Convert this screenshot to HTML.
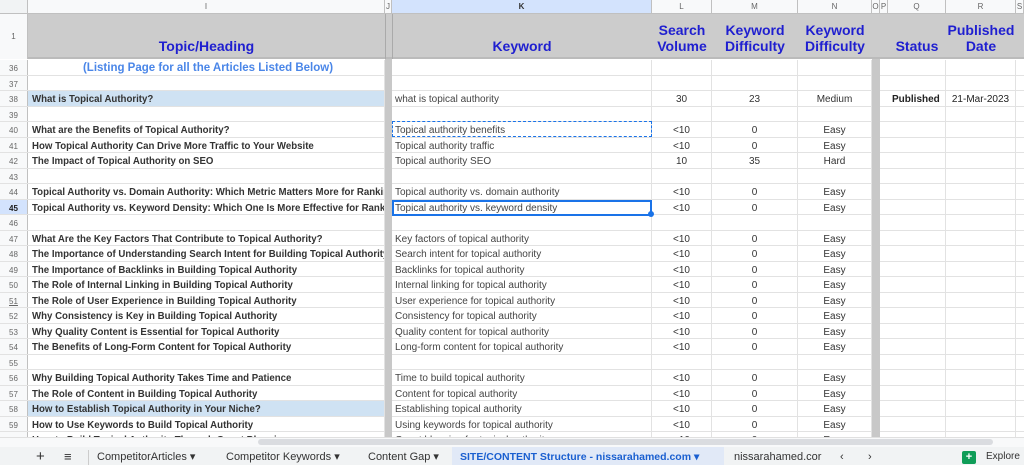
<!DOCTYPE html>
<html><head><meta charset="utf-8"><style>
*{margin:0;padding:0;box-sizing:border-box}
body{width:1024px;height:465px;overflow:hidden;background:#fff;font-family:"Liberation Sans",Arial,sans-serif;position:relative;color:#222}
.a{position:absolute}
.ch{top:0;height:14px;background:#f8f9fa;border-right:1px solid #c0c0c0;border-bottom:1px solid #c0c0c0;font-size:8px;color:#666;text-align:center;line-height:14px}
.row{position:absolute;left:0;width:1024px;height:15.5px;border-bottom:1px solid #e2e2e2}
.rn{position:absolute;left:0;width:28px;height:100%;background:#f8f9fa;border-right:1px solid #c0c0c0;font-size:8px;color:#666;text-align:center;line-height:17px}
.c{position:absolute;top:0;height:100%;line-height:17px;font-size:10px;white-space:nowrap;overflow:hidden;border-right:1px solid #e2e2e2}
.t{left:28px;width:357px;padding-left:4px;font-weight:bold;color:#333;font-size:10.5px}
.t span{display:inline-block;transform:scaleX(.92);transform-origin:0 50%}
.k{left:392px;width:260px;padding-left:3px;color:#444}
.l{left:652px;width:60px;text-align:center;color:#333}
.m{left:712px;width:86px;text-align:center;color:#333}
.n{left:798px;width:74px;text-align:center;color:#333}
.q{left:888px;width:58px;padding-left:4px;font-weight:bold}
.r{left:946px;width:70px;text-align:center}
.h{position:absolute;font-weight:bold;color:#1f1fd0;font-size:14px;text-align:center;line-height:16px}
</style></head><body>
<div class="a ch" style="left:0;width:28px;background:#f1f3f4"></div>
<div class="a ch" style="left:28px;width:357px">I</div>
<div class="a ch" style="left:385px;width:7px">J</div>
<div class="a ch" style="left:392px;width:260px;background:#d3e3fd;font-weight:bold;color:#333">K</div>
<div class="a ch" style="left:652px;width:60px">L</div>
<div class="a ch" style="left:712px;width:86px">M</div>
<div class="a ch" style="left:798px;width:74px">N</div>
<div class="a ch" style="left:872px;width:8px">O</div>
<div class="a ch" style="left:880px;width:8px">P</div>
<div class="a ch" style="left:888px;width:58px">Q</div>
<div class="a ch" style="left:946px;width:70px">R</div>
<div class="a ch" style="left:1016px;width:8px">S</div>
<div class="a" style="left:0;top:14px;width:28px;height:45px;background:#f8f9fa;border-right:1px solid #c0c0c0;font-size:8px;color:#666;text-align:center;line-height:45px">1</div>
<div class="a" style="left:28px;top:14px;width:996px;height:45px;background:#cccccc;border-bottom:2px solid #bbb"></div>
<div class="h" style="left:28px;width:357px;top:38px">Topic/Heading</div>
<div class="h" style="left:392px;width:260px;top:38px">Keyword</div>
<div class="h" style="left:652px;width:60px;top:22px">Search<br>Volume</div>
<div class="h" style="left:712px;width:86px;top:22px">Keyword<br>Difficulty</div>
<div class="h" style="left:798px;width:74px;top:22px">Keyword<br>Difficulty</div>
<div class="h" style="left:888px;width:58px;top:38px">Status</div>
<div class="h" style="left:946px;width:70px;top:22px">Published<br>Date</div>
<div class="a" style="left:385px;top:14px;width:1px;height:45px;background:#aaa"></div>
<div class="a" style="left:392px;top:14px;width:1px;height:45px;background:#aaa"></div>

<div id="rows"></div>
<div class="a" style="left:385px;top:59px;width:7px;height:378px;background:#c8c8c8"></div>
<div class="a" style="left:872px;top:59px;width:8px;height:378px;background:#c8c8c8"></div>

<div class="a" style="left:392px;top:199.5px;width:260px;height:16px;border:2px solid #1a73e8"></div>
<div class="a" style="left:648px;top:211px;width:6px;height:6px;border-radius:3px;background:#1a73e8"></div>
<div class="a" style="left:392px;top:121px;width:260px;height:16px;border:1px dashed #1a73e8"></div>

<div class="a" style="left:0;top:437px;width:1024px;height:10px;background:#f8f9fa;border-top:1px solid #e0e0e0"></div>
<div class="a" style="left:258px;top:439px;width:735px;height:6px;background:#dadce0;border-radius:3px"></div>
<div class="a" style="left:0;top:447px;width:1024px;height:18px;background:#f1f3f4;font-size:11px;color:#333;line-height:20px;white-space:nowrap">
<span class="a" style="left:36px;font-size:15px">+</span>
<span class="a" style="left:64px;font-size:13px">≡</span>
<span class="a" style="left:88px;top:3px;width:1px;height:15px;background:#ccc"></span>
<span class="a" style="left:97px">CompetitorArticles ▾</span>
<span class="a" style="left:226px">Competitor Keywords ▾</span>
<span class="a" style="left:368px">Content Gap ▾</span>
<span class="a" style="left:452px;top:0;width:272px;height:18px;background:#e1e9f7;padding-left:8px;color:#1a5fd0;font-weight:bold;font-size:10.5px">SITE/CONTENT Structure - nissarahamed.com ▾</span>
<span class="a" style="left:734px">nissarahamed.cor</span>
<span class="a" style="left:840px">‹</span>
<span class="a" style="left:868px">›</span>
<span class="a" style="left:962px;top:4px;width:14px;height:13px;background:#0f9d58;border-radius:2px;color:#fff;text-align:center;line-height:13px;font-weight:bold">+</span>
<span class="a" style="left:986px;font-size:10px">Explore</span>
</div>
<script>
var R=[
[36,'','','','','','','',0],
[37],
[38,'What is Topical Authority?','what is topical authority','30','23','Medium','Published','21-Mar-2023',1],
[39],
[40,'What are the Benefits of Topical Authority?','Topical authority benefits','<10','0','Easy'],
[41,'How Topical Authority Can Drive More Traffic to Your Website','Topical authority traffic','<10','0','Easy'],
[42,'The Impact of Topical Authority on SEO','Topical authority SEO','10','35','Hard'],
[43],
[44,'Topical Authority vs. Domain Authority: Which Metric Matters More for Ranking','Topical authority vs. domain authority','<10','0','Easy'],
[45,'Topical Authority vs. Keyword Density: Which One Is More Effective for Ranking','Topical authority vs. keyword density','<10','0','Easy'],
[46],
[47,'What Are the Key Factors That Contribute to Topical Authority?','Key factors of topical authority','<10','0','Easy'],
[48,'The Importance of Understanding Search Intent for Building Topical Authority','Search intent for topical authority','<10','0','Easy'],
[49,'The Importance of Backlinks in Building Topical Authority','Backlinks for topical authority','<10','0','Easy'],
[50,'The Role of Internal Linking in Building Topical Authority','Internal linking for topical authority','<10','0','Easy'],
[51,'The Role of User Experience in Building Topical Authority','User experience for topical authority','<10','0','Easy'],
[52,'Why Consistency is Key in Building Topical Authority','Consistency for topical authority','<10','0','Easy'],
[53,'Why Quality Content is Essential for Topical Authority','Quality content for topical authority','<10','0','Easy'],
[54,'The Benefits of Long-Form Content for Topical Authority','Long-form content for topical authority','<10','0','Easy'],
[55],
[56,'Why Building Topical Authority Takes Time and Patience','Time to build topical authority','<10','0','Easy'],
[57,'The Role of Content in Building Topical Authority','Content for topical authority','<10','0','Easy'],
[58,'How to Establish Topical Authority in Your Niche?','Establishing topical authority','<10','0','Easy','','',1],
[59,'How to Use Keywords to Build Topical Authority','Using keywords for topical authority','<10','0','Easy'],
[60,'How to Build Topical Authority Through Guest Blogging','Guest blogging for topical authority','<10','0','Easy']
];
var h='';
R.forEach(function(r){var n=r[0],top=60+(n-36)*15.5;
var e=function(s){return (s||'').replace(/</g,'&lt;')};
var rn=n==45?'background:#d3e3fd;color:#1a1a1a;font-weight:bold':'';
h+='<div class="row" style="top:'+top+'px"><div class="rn" style="'+rn+'">'+(n==51?'<u>51</u>':n)+'</div>';
if(n==36)h+='<div class="c t" style="text-align:center;color:#4a86e8;font-size:11.5px;line-height:16px">(Listing Page for all the Articles Listed Below)</div>';
else h+='<div class="c t" style="'+(r[8]?'background:#cfe2f3':'')+'"><span>'+e(r[1])+'</span></div>';
h+='<div class="c k">'+e(r[2])+'</div><div class="c l">'+e(r[3])+'</div><div class="c m">'+e(r[4])+'</div><div class="c n">'+e(r[5])+'</div><div class="c q">'+e(r[6])+'</div><div class="c r">'+e(r[7])+'</div></div>';});
document.getElementById('rows').innerHTML=h;
</script>
</body></html>
